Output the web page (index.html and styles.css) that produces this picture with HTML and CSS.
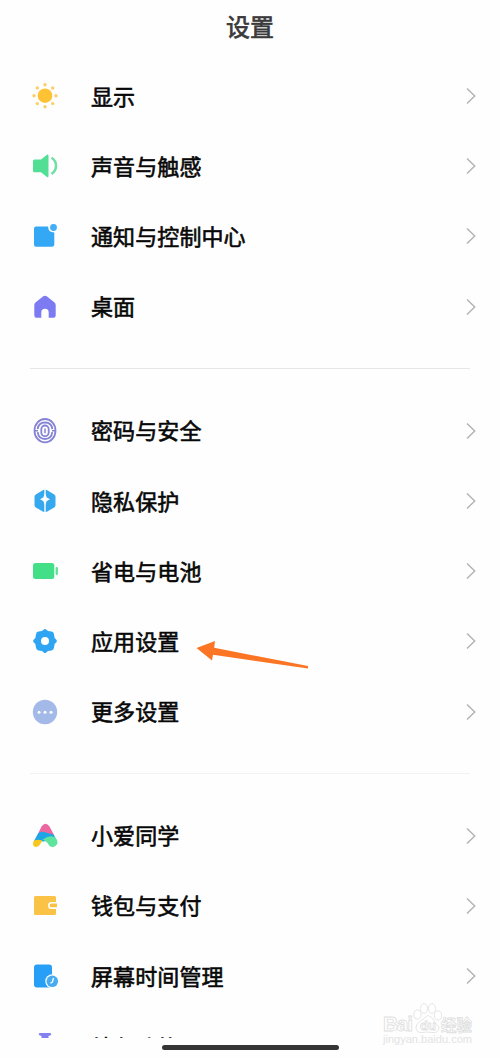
FILE: index.html
```html
<!DOCTYPE html>
<html lang="zh-CN">
<head>
  <meta charset="UTF-8">
  <meta name="viewport" content="width=device-width, initial-scale=1.0">
  <title>设置</title>
  <link rel="stylesheet" href="styles.css">
</head>
<body>
  <svg width="0" height="0" class="defs">
    <symbol id="chevron" viewBox="0 0 10 18">
      <path d="M1 1.5 8.7 9 1 16.5" fill="none" stroke="#b4b4b4" stroke-width="1.5"/>
    </symbol>
  </svg>

  <header class="title-bar"><h1>设置</h1></header>

  <main class="settings">
    <ul class="group">
      <li class="row">
        <svg class="icon" viewBox="0 0 30 30">
          <circle cx="15" cy="14.7" r="7.3" fill="#fdc334"/>
          <g fill="#f8cf68">
            <circle cx="15" cy="3.8" r="1.7"/><circle cx="15" cy="25.8" r="1.7"/>
            <circle cx="4" cy="14.8" r="1.7"/><circle cx="26" cy="14.8" r="1.7"/>
            <circle cx="7.3" cy="7" r="1.7"/><circle cx="22.7" cy="7" r="1.7"/>
            <circle cx="7.3" cy="22.6" r="1.7"/><circle cx="22.7" cy="22.6" r="1.7"/>
          </g>
        </svg>
        <span class="label">显示</span>
        <svg class="arrow"><use href="#chevron"/></svg>
      </li>
      <li class="row">
        <svg class="icon" viewBox="0 0 30 30">
          <path d="M4.5 8.5H11L17 3.8Q18.5 3 18.5 4.8V25Q18.5 26.8 17 26L11 21.3H4.5Q3 21.3 3 19.8V10Q3 8.5 4.5 8.5Z" fill="#52de94"/>
          <path d="M21.5 6.8Q26 9.5 26 14.8T21.5 23" fill="none" stroke="#6ee0a5" stroke-width="2.5"/>
        </svg>
        <span class="label">声音与触感</span>
        <svg class="arrow"><use href="#chevron"/></svg>
      </li>
      <li class="row">
        <svg class="icon" viewBox="0 0 30 30">
          <path d="M6 5.5H18.2Q17.8 11.3 24.3 11.5V23.5Q24.3 25.7 22 25.7H6Q4 25.7 4 23.5V7.7Q4 5.5 6 5.5Z" fill="#35a8f5"/>
          <circle cx="23.5" cy="6.5" r="3.4" fill="#42aef5"/>
        </svg>
        <span class="label">通知与控制中心</span>
        <svg class="arrow"><use href="#chevron"/></svg>
      </li>
      <li class="row">
        <svg class="icon" viewBox="0 0 30 30">
          <path d="M13.3 4.3Q15 3 16.7 4.3L24.3 10.2Q25.7 11.3 25.7 13V23.5Q25.7 25.7 23.5 25.7H18.7V20.5A3.7 3.7 0 0 0 11.3 20.5V25.7H6.5Q4.3 25.7 4.3 23.5V13Q4.3 11.3 5.7 10.2Z" fill="#7d7bf2"/>
        </svg>
        <span class="label">桌面</span>
        <svg class="arrow"><use href="#chevron"/></svg>
      </li>
    </ul>

    <hr class="divider">

    <ul class="group">
      <li class="row">
        <svg class="icon" viewBox="0 0 30 30" fill="none" stroke="#8583d6" stroke-width="1.8">
          <ellipse cx="15" cy="14.7" rx="10.5" ry="11.7"/>
          <path d="M7.7 13.2Q8.3 6.5 15 6.5T22.3 13.2M22.3 16.2Q21.5 23 15 23T7.7 16.2"/>
          <rect x="11.3" y="9.5" width="7.4" height="10.6" rx="3.7"/>
          <path d="M15 12.5V17.2M4.5 14.8H8M22 14.8H25.5" stroke-width="1.5"/>
        </svg>
        <span class="label">密码与安全</span>
        <svg class="arrow"><use href="#chevron"/></svg>
      </li>
      <li class="row">
        <svg class="icon" viewBox="0 0 30 30">
          <path d="M14.3 3.7V25.9Q13.5 26 12.7 25.5L5.8 21.4Q4.5 20.6 4.5 19V10.8Q4.5 9.3 5.8 8.5L12.7 4.3Q13.5 3.8 14.3 3.7ZM15.7 3.7V25.9Q16.5 26 17.3 25.5L24.2 21.4Q25.5 20.6 25.5 19V10.8Q25.5 9.3 24.2 8.5L17.3 4.3Q16.5 3.8 15.7 3.7Z" fill="#35a8ee"/>
          <path d="M15 7.5 16.8 11.5 20 13.3 16.8 15 15 19 13.2 15 10 13.3 13.2 11.5Z" fill="#fff"/>
        </svg>
        <span class="label">隐私保护</span>
        <svg class="arrow"><use href="#chevron"/></svg>
      </li>
      <li class="row">
        <svg class="icon" viewBox="0 0 30 30">
          <rect x="3" y="7" width="21.3" height="16" rx="2.5" fill="#42df88"/>
          <rect x="25.6" y="11" width="2.3" height="8" rx="1.1" fill="#5ce197"/>
        </svg>
        <span class="label">省电与电池</span>
        <svg class="arrow"><use href="#chevron"/></svg>
      </li>
      <li class="row">
        <svg class="icon" viewBox="0 0 30 30">
          <path d="M12 5.1 13.8 3.5Q15 2.5 16.2 3.5L18 5.1 21.5 5.5Q23.7 5.9 24 8.2L24.6 12 26.4 13.8Q27.4 15 26.4 16.2L24.6 18 24 21.8Q23.7 24.1 21.5 24.5L18 24.9 16.2 26.5Q15 27.5 13.8 26.5L12 24.9 8.5 24.5Q6.3 24.1 6 21.8L5.4 18 3.6 16.2Q2.6 15 3.6 13.8L5.4 12 6 8.2Q6.3 5.9 8.5 5.5Z" fill="#2ea5f3"/>
          <circle cx="15" cy="15" r="4" fill="#fff"/>
        </svg>
        <span class="label">应用设置</span>
        <svg class="arrow"><use href="#chevron"/></svg>
        <svg class="pointer" viewBox="0 0 114 32">
          <path d="M1.5 12 20 5 19.2 11.8 113 30V32.5L18 18.7 17 24.5Z" fill="#fb7524"/>
        </svg>
      </li>
      <li class="row">
        <svg class="icon" viewBox="0 0 30 30">
          <circle cx="15" cy="15" r="12.2" fill="#a3b9e8"/>
          <g fill="#fff"><circle cx="9" cy="15.3" r="1.5"/><circle cx="15" cy="15.3" r="1.5"/><circle cx="21" cy="15.3" r="1.5"/></g>
        </svg>
        <span class="label">更多设置</span>
        <svg class="arrow"><use href="#chevron"/></svg>
      </li>
    </ul>

    <hr class="divider light">

    <ul class="group">
      <li class="row">
        <svg class="icon" viewBox="0 0 30 30">
          <path d="M8 13 11.5 5.5Q15.5 0 19.5 5.5L24 14 9 16Z" fill="#ea67a0"/>
          <path d="M4 20 8.2 12.3Q12 9.8 16 11.5T23.7 13.5L26 18 13.5 20.5Z" fill="#1ea5e5"/>
          <path d="M12.5 18.8Q18.5 13.5 24.3 16 28.5 18.5 27.2 23 24 28 19.5 25 16.5 19.5 12.5 18.8Z" fill="#5ee49d"/>
          <path d="M4 19.5Q8 17.8 12.3 19.5L10 23.5Q7.5 27 4.3 25.5 1.8 23.5 4 19.5Z" fill="#f6c81d"/>
        </svg>
        <span class="label">小爱同学</span>
        <svg class="arrow"><use href="#chevron"/></svg>
      </li>
      <li class="row">
        <svg class="icon" viewBox="0 0 30 30">
          <path d="M5.5 4.9H24.5Q26 4.9 26 6.4V22.4Q26 23.9 24.5 23.9H5.5Q4 23.9 4 22.4V6.4Q4 4.9 5.5 4.9Z" fill="#fbc346"/>
          <path d="M27 11.7H21.5A2.7 2.7 0 0 0 21.5 17.1H27" fill="#fbc346" stroke="#fff" stroke-width="1.6"/>
        </svg>
        <span class="label">钱包与支付</span>
        <svg class="arrow"><use href="#chevron"/></svg>
      </li>
      <li class="row">
        <svg class="icon" viewBox="0 0 30 30">
          <rect x="4" y="3.5" width="18" height="23" rx="3" fill="#279ff7"/>
          <circle cx="22.3" cy="20.3" r="7" fill="#fff"/>
          <circle cx="22.3" cy="20.3" r="5.8" fill="#48acf1"/>
          <path d="M23.5 17 22.4 21 20.4 22.2" fill="none" stroke="#fff" stroke-width="1.3"/>
        </svg>
        <span class="label">屏幕时间管理</span>
        <svg class="arrow"><use href="#chevron"/></svg>
      </li>
      <li class="row last">
        <svg class="icon" viewBox="0 0 30 30">
          <path d="M10.5 2H19.5Q21.3 2 21.3 3.2 21.3 4.5 18.5 5V12L25 24Q25 27 22 27H8Q5 27 5 24L11.5 12V5Q8.7 4.5 8.7 3.2 8.7 2 10.5 2Z" fill="#8380ef"/>
        </svg>
        <span class="label">特色功能</span>
      </li>
    </ul>
  </main>

  <footer class="nav-bar"><div class="handle"></div></footer>

  <div class="watermark">
    <svg viewBox="0 0 92 44">
      <g fill="#fff" stroke="#dedede" stroke-width="0.8">
        <text x="1" y="29" textLength="30" class="wm-brand">Bai</text>
        <ellipse cx="35.5" cy="12.5" rx="3.6" ry="4.5"/>
        <ellipse cx="42" cy="6.5" rx="3.5" ry="4.8"/>
        <ellipse cx="50" cy="6.5" rx="3.5" ry="4.8"/>
        <ellipse cx="56" cy="13.5" rx="3.6" ry="4.5"/>
        <path d="M45.5 13.5Q49 13.5 51.5 18T57 25Q57 31.5 50 30.5 45 29.5 40 30.5 34 31 34 25 34 22 38.5 19T45.5 13.5Z"/>
        <text x="38" y="28" class="wm-du">du</text>
        <text x="59" y="29" class="wm-cn">经验</text>
      </g>
      <text x="1" y="41" textLength="89" class="wm-url">jingyan.baidu.com</text>
    </svg>
  </div>
</body>
</html>
```
FILE: styles.css
```css
* {
  box-sizing: border-box;
}
body {
  margin: 0;
  height: 1058px;
  display: flex;
  flex-direction: column;
  position: relative;
  overflow: hidden;
  background: #fefefe;
  color: #080808;
  font-family: "Noto Sans CJK SC", sans-serif;
}
.defs {
  position: absolute;
}
.title-bar {
  flex: none;
  height: 61px;
  padding-top: 8px;
  text-align: center;
}
h1 {
  margin: 0;
  font-size: 24px;
  line-height: 36px;
  font-weight: 400;
  color: #3a3a3a;
  -webkit-text-stroke: 0.7px #3a3a3a;
}
.settings {
  flex: none;
  height: 977px;
  overflow: hidden;
  padding: 0 24px 0 30px;
}
.group {
  list-style: none;
  margin: 0;
  padding: 0;
}
.row {
  position: relative;
  display: flex;
  align-items: center;
  height: 70.2px;
}
.icon {
  flex: none;
  width: 30px;
  height: 30px;
}
.label {
  flex: 1;
  margin-left: 31px;
  padding-bottom: 3px;
  font-size: 22px;
  line-height: 32px;
  font-weight: 400;
  letter-spacing: 0.1px;
  -webkit-text-stroke: 0.6px #080808;
}
.last .label {
  padding-bottom: 1px;
}
.arrow {
  flex: none;
  width: 10px;
  height: 18px;
}
.divider {
  height: 1px;
  margin: 26px 6px 27px 0;
  border: none;
  background: #e7e7e7;
}
.divider.light {
  background: #f2f2f2;
}
.pointer {
  position: absolute;
  left: 165px;
  top: 30px;
  width: 114px;
  height: 32px;
  overflow: visible;
}
.nav-bar {
  flex: 1;
  padding-top: 7px;
}
.handle {
  width: 177px;
  height: 5px;
  margin: 0 auto;
  border-radius: 3px;
  background: #353535;
}
.watermark {
  position: absolute;
  left: 382px;
  top: 1002px;
  width: 92px;
  height: 44px;
}
.watermark svg {
  display: block;
  width: 92px;
  height: 44px;
}
.wm-brand {
  font: bold 21px "Liberation Sans", sans-serif;
}
.wm-du {
  font: bold 13px "Liberation Sans", sans-serif;
}
.wm-cn {
  font: bold 15.5px "Noto Sans CJK SC", sans-serif;
}
.wm-url {
  font: 11px "Liberation Sans", sans-serif;
  fill: #e3e3e3;
}
```
